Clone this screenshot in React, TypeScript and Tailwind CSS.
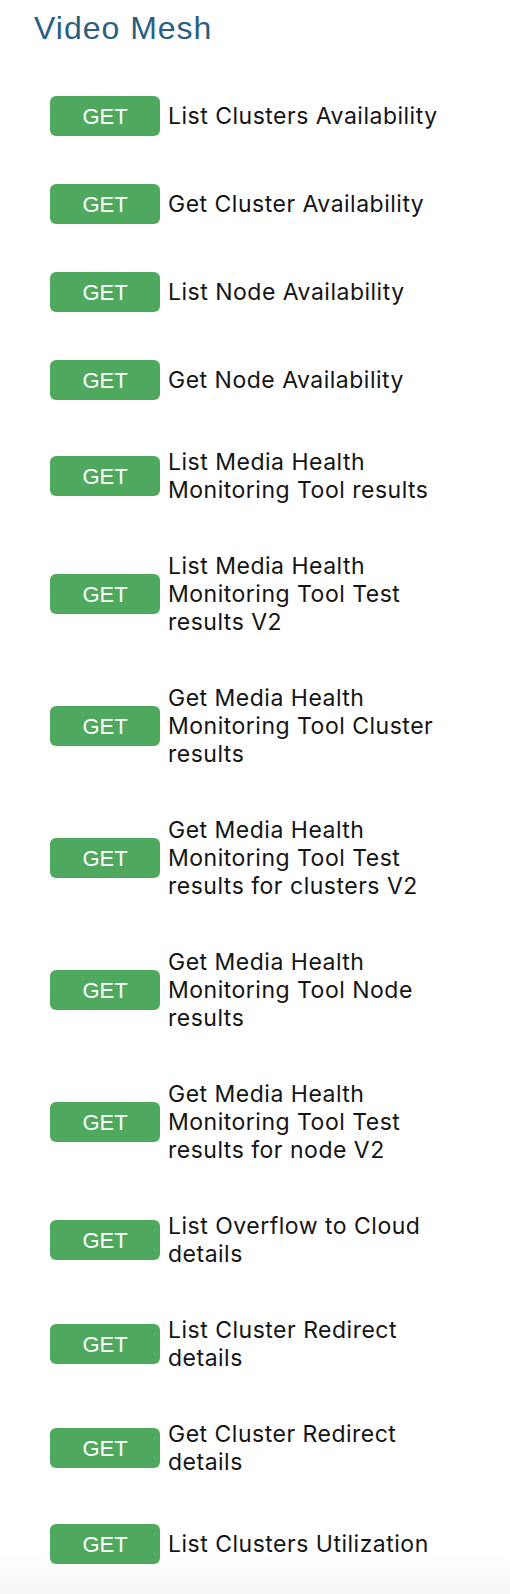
import React from "react";

const ENDPOINTS = [
  "List Clusters Availability",
  "Get Cluster Availability",
  "List Node Availability",
  "Get Node Availability",
  "List Media Health Monitoring Tool results",
  "List Media Health Monitoring Tool Test results V2",
  "Get Media Health Monitoring Tool Cluster results",
  "Get Media Health Monitoring Tool Test results for clusters V2",
  "Get Media Health Monitoring Tool Node results",
  "Get Media Health Monitoring Tool Test results for node V2",
  "List Overflow to Cloud details",
  "List Cluster Redirect details",
  "Get Cluster Redirect details",
  "List Clusters Utilization",
];

export default function App() {
  return (
    <div className="w-[510px] h-[1594px] overflow-hidden bg-gradient-to-b from-white from-[97.5%] to-[#f6f6f6] font-['Inter','Liberation_Sans',sans-serif]">
      <h2 className="pl-[34px] pt-[9px] text-[32px] leading-[38px] tracking-[1px] text-[#2a5f7f] font-['Liberation_Sans',sans-serif]">
        Video Mesh
      </h2>

      {/* Endpoint list */}
      <ul className="flex flex-col gap-12 pl-[50px] pt-[49px]">
        {ENDPOINTS.map(name => (
          <li key={name} className="flex items-center gap-2">
            <span className="w-[110px] h-10 shrink-0 rounded-md bg-[#4ea85d] text-white text-[22px] flex items-center justify-center font-['Liberation_Sans',sans-serif]">
              GET
            </span>
            <span className="max-w-[280px] text-[23px] leading-7 tracking-[0.5px] text-[#141414]">{name}</span>
          </li>
        ))}
      </ul>
    </div>
  );
}
